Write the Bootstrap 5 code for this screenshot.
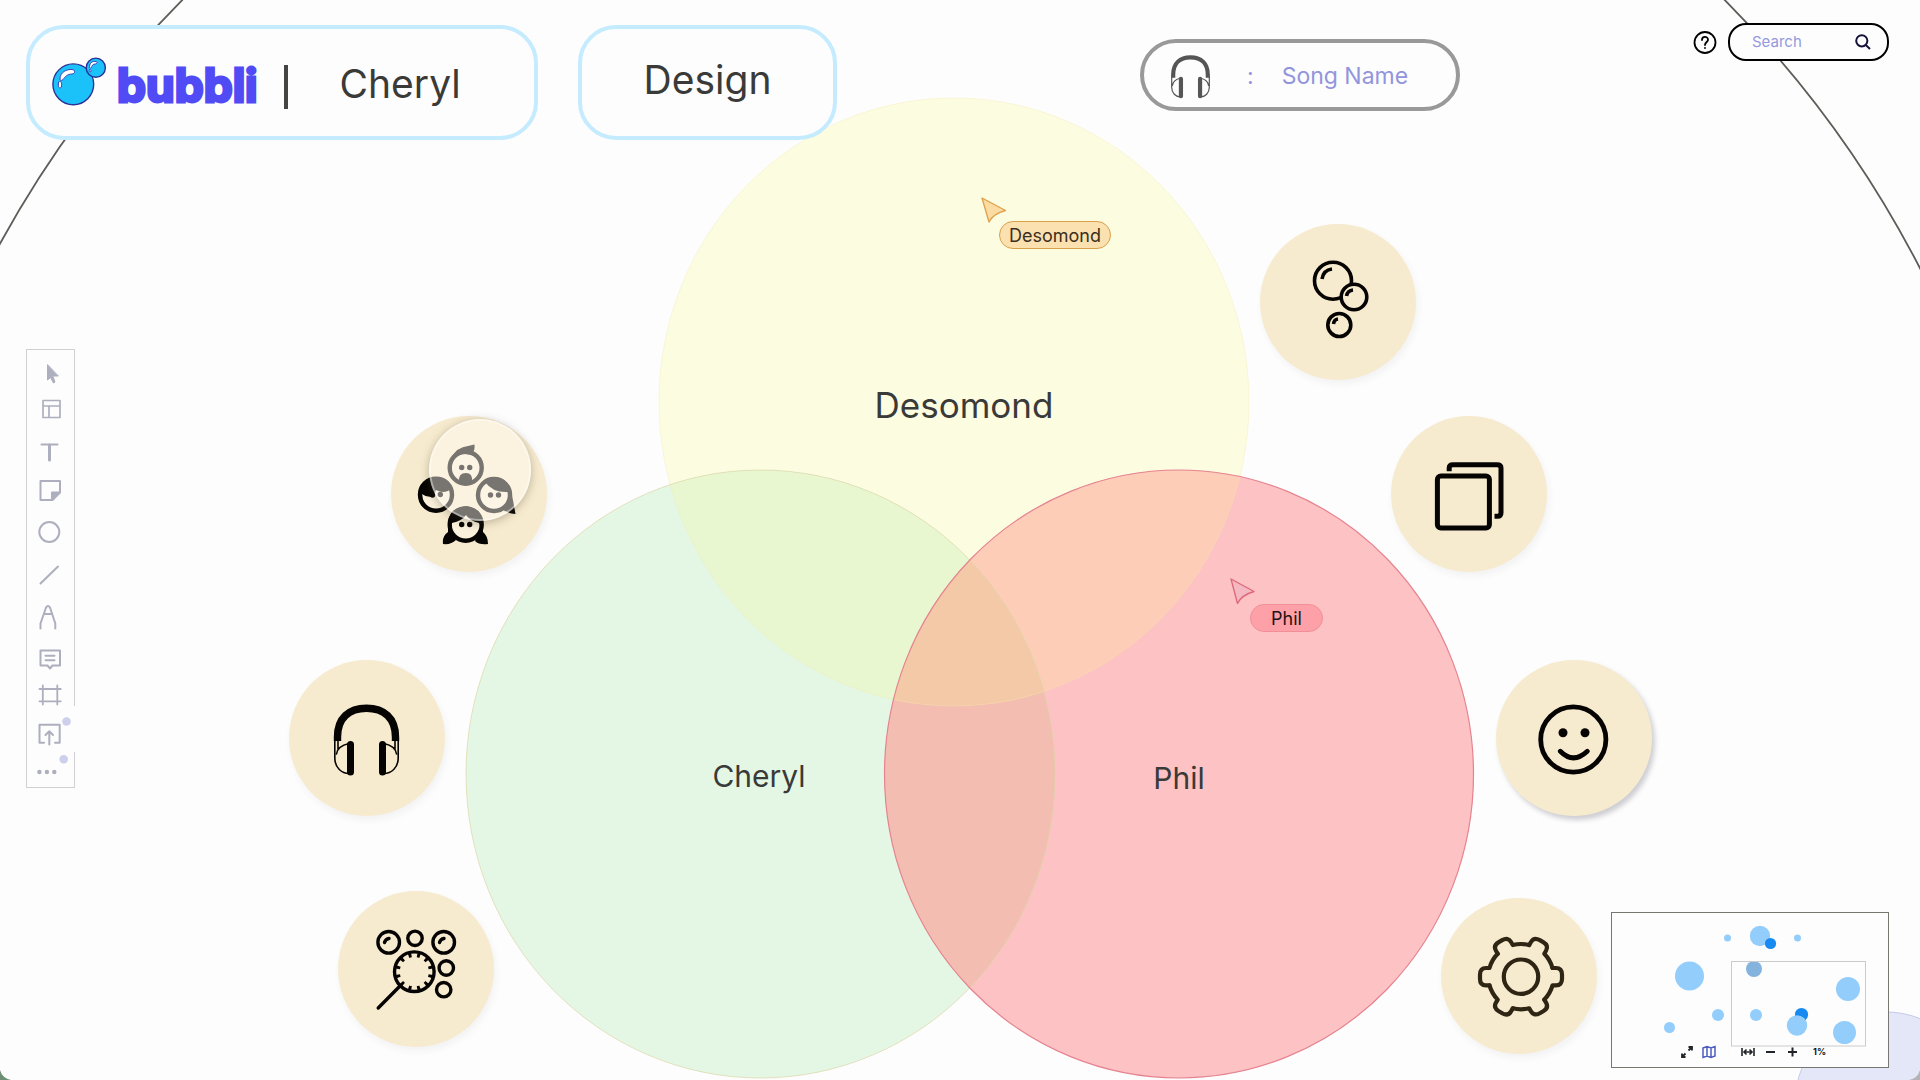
<!DOCTYPE html>
<html lang="en">
<head>
<meta charset="utf-8">
<meta name="viewport" content="width=device-width, initial-scale=1">
<title>bubbli – Design</title>
<link href="https://cdn.jsdelivr.net/npm/bootstrap@5.3.0/dist/css/bootstrap.min.css" rel="stylesheet">
<style>
  :root { --paper:#fdfdfd; --ink:#3a3a38; --sand:#f7ebcf; --tool:#adafbe; }
  body { background:var(--paper); color:var(--ink); font-family:Inter,"Liberation Sans",sans-serif; }
  svg { display:block; overflow:visible; }
  .workspace { min-height:100vh; overflow:hidden; }

  .topbar { padding:23px 31px 0 26px; z-index:3; }
  .panel-box { height:115px; margin-top:2px; border:4px solid #c5ebff; border-radius:38px; background:var(--paper); font-size:39px; }
  .panel-brand { width:512px; padding:4px 0 0 22px; margin-right:40px; }
  .panel-page { width:259px; padding-bottom:4px; margin-right:303px; }
  .brand { color:#514bf5; font-size:46px; font-weight:700; line-height:56px; gap:10px; -webkit-text-stroke:3px #514bf5; stroke-linejoin:round; }
  .brand:hover { color:#514bf5; }
  .divider { width:4px; height:44px; margin:4px 52px 0 26px; background:#444442; }
  .song { width:320px; height:72px; margin-top:16px; padding:2px 27px 0; border:4px solid #999; border-radius:36px; background:var(--paper); color:#9295dc; font-size:23px; }
  .song-colon { margin:0 28px 0 37px; }
  .help { width:23px; height:23px; }
  .search { width:161px; height:38px; border:2px solid #000; border-radius:18px; background:var(--paper); padding:0 16px 0 22px; }
  .search input { width:80px; font-size:15px; outline:0; color:#9499dd; }
  .search input::placeholder { color:#9499dd; opacity:1; }

  .tools { left:26px; top:349px; width:49px; padding:4px 0; border:1px solid #d2d0d3; background:var(--paper); z-index:2; }
  .tools::after { content:""; position:absolute; right:-2px; top:356px; width:4px; height:46px; background:var(--paper); }
  .tools button { width:47px; height:39px; }
  .tools svg { width:47px; height:39px; fill:none; stroke:var(--tool); stroke-width:2; stroke-linecap:round; stroke-linejoin:round; }

  .canvas { inset:0; }
  .scene { left:calc(50% - 960px); top:0; width:1920px; height:1080px; }
  .member { width:240px; text-align:center; line-height:40px; font-size:30px; }
  .m-top { left:calc(50% - 116px); top:385px; font-size:35px; }
  .m-left { left:calc(50% - 321px); top:756px; }
  .m-right { left:calc(50% + 99px); top:758px; }

  .orb { width:156px; height:156px; background:var(--sand); box-shadow:2px 4px 7px rgba(60,60,80,.06); }
  .orb svg { width:156px; height:156px; fill:none; stroke:#060402; stroke-linecap:round; stroke-linejoin:round; }
  .o-bubbles { left:calc(50% + 300px); top:224px; }
  .o-layers { left:calc(50% + 431px); top:416px; }
  .o-smile { left:calc(50% + 536px); top:660px; box-shadow:3px 4px 5px rgba(60,60,80,.24); }
  .o-gear { left:calc(50% + 481px); top:898px; }
  .o-people { left:calc(50% - 569px); top:416px; }
  .o-music { left:calc(50% - 671px); top:660px; }
  .o-wand { left:calc(50% - 622px); top:891px; }
  .lens { left:38px; top:3px; width:102px; height:102px; background:rgba(255,250,242,.46); border:2px solid rgba(255,255,255,.4); box-shadow:0 2px 10px rgba(70,60,40,.34); }

  .tag { height:28px; border:1px solid; border-radius:14px; font-size:18px; line-height:28px; text-align:center; color:#3b2e1c; }
  .t-top { left:calc(50% + 39px); top:221px; width:112px; background:#fce1b0; border-color:#d9a04c; }
  .t-right { left:calc(50% + 290px); top:604px; width:73px; background:#fda0a7; border-color:#f18f99; color:#1d1214; }

  .minimap { right:31px; bottom:12px; width:278px; height:156px; border:1px solid #777670; background:var(--paper); z-index:2; }
  .mini-controls { left:68px; bottom:7px; height:16px; color:#101522; }
  .mini-controls svg { height:14px; fill:none; stroke:currentColor; stroke-width:2; }
  .map-toggle { color:#4c5cc0; }
  .zoom-level { font-size:9px; font-weight:700; line-height:14px; margin-left:6px; }
</style>
</head>
<body>
<main class="workspace position-relative">

  <header class="topbar position-relative d-flex align-items-start">
    <div class="panel-box panel-brand d-flex align-items-center flex-shrink-0">
      <a href="#" class="brand d-flex align-items-start text-decoration-none">
        <svg width="55" height="49" viewBox="0 0 55 49" fill="#1bc2fa" stroke="#2b3196" stroke-width="1.4" aria-hidden="true">
          <circle cx="21.3" cy="27.3" r="20.4"/><circle cx="43.8" cy="10.7" r="9.6"/>
          <path d="M8 22C8 15 15 12 20 12.500C24 13 23 17 20 17C15 17 13 20 11 22.500C9 24 8 24 8 22ZM6.500 25C9 23.500 10 26 9.500 29C9 32 6.500 31 6.300 29ZM37.500 9.500C38 5 41 4.200 44 4.500C46 5 45 7 43 7C40 7.500 40 9 39.500 10.500C38.500 11.500 37.500 11 37.500 9.500ZM37.500 12.500C39 12 39.500 14 38.500 15C37 15 37 13.500 37.500 12.500Z" fill="#fff" stroke="#4140b8" stroke-width="1"/>
        </svg>
        <span>bubbli</span>
      </a>
      <span class="divider"></span>
      <span>Cheryl</span>
    </div>
    <h1 class="panel-box panel-page d-flex align-items-center justify-content-center fw-normal mb-0 flex-shrink-0">Design</h1>
    <div class="song d-flex align-items-center flex-shrink-0">
      <svg width="39" height="43" viewBox="45 44 65 72" fill="none" stroke="#555" aria-hidden="true">
        <path d="M48.500 82V77C48.500 58 60 48 77.500 48S106.500 58 106.500 77V82" stroke-width="7"/>
        <path d="M46 80V98C46 108 53 114 60 114M60 83Q48 86 47 96M109 80V98C109 108 102 114 95 114M95 83Q107 86 108 96" stroke-width="2"/>
        <path d="M61.500 84V113M93.500 84V113" stroke-width="7" stroke-linecap="round"/>
      </svg>
      <span class="song-colon">:</span><span>Song Name</span>
    </div>
    <div class="ms-auto d-flex align-items-center gap-2">
      <button type="button" class="help btn p-0 border-0 me-1" aria-label="Help">
        <svg width="23" height="23" viewBox="0 0 23 23" fill="none" stroke="#000" stroke-width="1.800" stroke-linecap="round"><circle cx="12" cy="11.500" r="10.500"/><path d="M9 9C9 5 15 5 15 8.700C15 11 12 11 12 14M12 16.800V17"/></svg>
      </button>
      <form class="search d-flex align-items-center justify-content-between">
        <input type="text" class="border-0 bg-transparent p-0" placeholder="Search" aria-label="Search">
        <button type="button" class="btn p-0 border-0" aria-label="Run search">
          <svg width="16" height="16" viewBox="0 0 16 16" fill="none" stroke="#14143a" stroke-width="2"><circle cx="6.800" cy="6.800" r="5.600"/><path d="M10.800 11L15 15"/></svg>
        </button>
      </form>
    </div>
  </header>

  <nav class="tools position-absolute d-flex flex-column" aria-label="Drawing tools">
    <button type="button" class="btn p-0 border-0" aria-label="Select"><svg><path d="M20.500 11V26L23.500 23.500L26.500 29L28 28L25.800 22H31Z" fill="#adafbe" stroke-width="1"/></svg></button>
    <button type="button" class="btn p-0 border-0" aria-label="Templates"><svg><path d="M16 7.500H33V24.500H16ZM16 13H33M22 13V24.500" stroke-width="1.700"/></svg></button>
    <button type="button" class="btn p-0 border-0" aria-label="Text"><svg><path d="M14.500 12.500H30.500" stroke-width="2"/><path d="M22.500 13V28" stroke-width="3"/></svg></button>
    <button type="button" class="btn p-0 border-0" aria-label="Sticky note"><svg><path d="M13.500 10H33V21L25.500 29H13.500Z"/><path d="M33 21.500H25V29Z" fill="#adafbe"/></svg></button>
    <button type="button" class="btn p-0 border-0" aria-label="Shape"><svg><circle cx="22.300" cy="22" r="10"/></svg></button>
    <button type="button" class="btn p-0 border-0" aria-label="Line"><svg><path d="M13.500 34.500L31 17.500"/></svg></button>
    <button type="button" class="btn p-0 border-0" aria-label="Pen"><svg><path d="M13.500 40.500V35.500L19 19.500Q21 16.500 23 19.500L28.300 35.500V40.500M17.500 26H24.500"/></svg></button>
    <button type="button" class="btn p-0 border-0" aria-label="Comment"><svg><path d="M13.500 23.500H33V38.500H25.500L23 41.500L20.500 38.500H13.500ZM18.500 28.800H27.500M18.500 33.300H27.500"/></svg></button>
    <button type="button" class="btn p-0 border-0" aria-label="Frame"><svg><path d="M15.800 19.500V38.500M30.300 19.500V38.500M12.500 23H33.700M12.500 35.300H33.700" stroke-width="1.800"/></svg></button>
    <button type="button" class="btn p-0 border-0" aria-label="Upload"><svg><path d="M17 37.700H12.500V19.700H32.700V37.700H28M22.300 39.500V26.500M18.500 30L22.300 26.300L26 30"/><circle cx="39.500" cy="16.500" r="4.300" fill="#cdcfed" stroke="none"/></svg></button>
    <button type="button" class="btn p-0 border-0" aria-label="More"><svg><g fill="#adafbe" stroke="none"><circle cx="12.400" cy="28" r="2.200"/><circle cx="19.900" cy="28" r="2.200"/><circle cx="27.300" cy="28" r="2.200"/></g><circle cx="36.700" cy="15.300" r="4.300" fill="#cdcfed" stroke="none"/></svg></button>
  </nav>

  <section class="canvas position-absolute" aria-label="Team board">
    <svg class="scene position-absolute" viewBox="0 0 1920 1080" aria-hidden="true">
      <defs>
        <ellipse id="eY" cx="954" cy="402" rx="295" ry="304"/>
        <ellipse id="eG" cx="760.500" cy="774" rx="294.500" ry="304"/>
        <ellipse id="eR" cx="1179" cy="774" rx="294.500" ry="304"/>
        <clipPath id="inG"><use href="#eG"/></clipPath>
        <clipPath id="inR"><use href="#eR"/></clipPath>
      </defs>
      <circle cx="953.500" cy="766" r="1087" fill="none" stroke="#5c5c58" stroke-width="1.800"/>
      <circle cx="1886" cy="1103" r="91" fill="#e4e7f8" stroke="#c8c7ea"/>
      <use href="#eY" fill="#fcfce1"/>
      <use href="#eG" fill="#e4f7e4"/>
      <use href="#eR" fill="#fdc2c3"/>
      <g clip-path="url(#inG)"><use href="#eY" fill="#e8f7d0"/><use href="#eR" fill="#f3bdb1"/></g>
      <g clip-path="url(#inR)"><use href="#eY" fill="#fdcdb7"/><g clip-path="url(#inG)"><use href="#eY" fill="#f4c9a7"/></g></g>
      <use href="#eY" fill="none" stroke="#f4e9a8" stroke-opacity=".35"/>
      <use href="#eG" fill="none" stroke="#dcd6a8" stroke-opacity=".7"/>
      <use href="#eR" fill="none" stroke="#e58390" stroke-width="1.200"/>
      <path d="M982 198L1005.500 210.500Q993.500 213.500 989 222Z" fill="#fbdca2" stroke="#dfa04a" stroke-width="1.300" stroke-linejoin="round"/>
      <path d="M1231 579L1254 591.500Q1241.500 595 1237.500 603.500Z" fill="#f4b8c2" stroke="#df6678" stroke-width="1.300" stroke-linejoin="round"/>
      <path d="M0 1070Q2 1078 11 1080H0Z" fill="#6d8f72"/>
      <path d="M1920 1070Q1918 1078 1909 1080H1920Z" fill="#b4b4b8"/>
    </svg>

    <div class="member m-top position-absolute">Desomond</div>
    <div class="member m-left position-absolute">Cheryl</div>
    <div class="member m-right position-absolute">Phil</div>
    <div class="tag t-top position-absolute">Desomond</div>
    <div class="tag t-right position-absolute">Phil</div>

    <button type="button" class="orb o-bubbles btn p-0 border-0 rounded-circle position-absolute" aria-label="Bubbles">
      <svg stroke-width="3.600"><circle cx="73" cy="56.700" r="18.500"/><circle cx="94" cy="73" r="12.800" fill="#f7ebcf"/><circle cx="79.300" cy="101" r="11.500"/><path d="M62 55Q63.500 46 72 45M86.500 72Q87.500 66.500 93 66M73.500 100Q74 95.500 78 95" stroke-linecap="butt"/></svg>
    </button>
    <button type="button" class="orb o-layers btn p-0 border-0 rounded-circle position-absolute" aria-label="Layers">
      <svg stroke-width="5"><rect x="46.400" y="60" width="52" height="52" rx="3.500"/><path d="M58.200 55.300V52Q58.200 48.700 62 48.700H106Q110 48.700 110 52V96.800Q110 100.300 106.500 100.300H103.500" stroke-linecap="butt"/></svg>
    </button>
    <button type="button" class="orb o-smile btn p-0 border-0 rounded-circle position-absolute" aria-label="Reactions">
      <svg stroke-width="4.800"><circle cx="77.300" cy="79.500" r="32.600"/><path d="M64.300 91.300Q77.300 104.500 91.300 91.300"/><g fill="#060402" stroke="none"><circle cx="67" cy="72.700" r="4.500"/><circle cx="89" cy="72.700" r="4.500"/></g></svg>
    </button>
    <button type="button" class="orb o-gear btn p-0 border-0 rounded-circle position-absolute" aria-label="Settings">
      <svg><defs><path id="tooth" d="M31.500-8.700H35Q41-8.700 41-2V2Q41 8.700 35 8.700H31.500A32.700 32.700 0 0 1 23.300 22.900"/></defs>
        <g transform="translate(80 78.700)" stroke="#2f2514" stroke-width="4.200"><circle r="17.200"/><use href="#tooth"/><use href="#tooth" transform="rotate(60)"/><use href="#tooth" transform="rotate(120)"/><use href="#tooth" transform="rotate(180)"/><use href="#tooth" transform="rotate(240)"/><use href="#tooth" transform="rotate(300)"/></g></svg>
    </button>
    <button type="button" class="orb o-people btn p-0 border-0 rounded-circle position-absolute" aria-label="People">
      <svg stroke-width="4.400"><g fill="#faf1dc"><circle cx="74.700" cy="51.700" r="16"/><circle cx="45" cy="78.700" r="16"/><circle cx="103" cy="79" r="16"/><circle cx="74.700" cy="108.700" r="16"/></g>
        <g fill="#060402" stroke="none">
          <path d="M60 42Q66 31 77 30L83.500 28.500Q84 34 82 36Q87 38 90 44Q75 33 60 42ZM68 66Q67 57 75 57Q82 57 81 66Q75 70 68 66Z"/>
          <path d="M28 78Q29 62 45 61Q58 61 61 72Q54 79 45 74Q43 79 43 80Q36 82 31 78Q31 87 38 92L34 93Q27 88 28 78Z"/>
          <path d="M94 66Q98 61 103 61Q119 62 121 79L124.500 98Q115 97 111 93L117 87Q118 80 117 76Q102 77 94 66Z"/>
          <path d="M57 108Q58 91 75 90Q92 92 92 108V116Q97 120 97 128Q88 129 84 125L88 116Q91 112 88 107Q79 105 75 99Q71 105 61 107Q58 112 62 117L65 124Q60 129 52 128Q51 120 57 116Z"/>
          <circle cx="70.700" cy="51.500" r="2.700"/><circle cx="78.700" cy="51.500" r="2.700"/><circle cx="41.500" cy="79" r="2.700"/><circle cx="49.300" cy="78.500" r="2.700"/><circle cx="99.500" cy="79" r="2.700"/><circle cx="107.500" cy="79" r="2.700"/><circle cx="70.700" cy="108.500" r="2.700"/><circle cx="78.700" cy="108.500" r="2.700"/>
        </g></svg>
      <span class="lens position-absolute rounded-circle"></span>
    </button>
    <button type="button" class="orb o-music btn p-0 border-0 rounded-circle position-absolute" aria-label="Music">
      <svg><path d="M48.500 81V77C48.500 58 60 48.200 77.500 48.200S106.500 58 106.500 77V81" stroke-width="7.400" stroke-linecap="butt"/>
        <path d="M45.800 80V98C45.800 108 53 113.500 60 113.500M60 83.500Q48.500 86 47.500 94M49 80V89M109.200 80V98C109.200 108 102 113.500 95 113.500M95 83.500Q106.500 86 107.500 94M106 80V89" stroke-width="1.600"/>
        <path d="M61.500 84.500V112M93.500 84.500V112" stroke-width="7"/></svg>
    </button>
    <button type="button" class="orb o-wand btn p-0 border-0 rounded-circle position-absolute" aria-label="Bubble wand">
      <svg stroke-width="3.400"><circle cx="50.700" cy="51.300" r="10.800"/><circle cx="105.700" cy="51.300" r="10.800"/><circle cx="77" cy="47.300" r="7.200"/><circle cx="108.300" cy="77" r="7.200"/><circle cx="105.700" cy="98.700" r="7.200"/><circle cx="76.300" cy="80.700" r="19.800"/>
        <circle cx="76.300" cy="80.700" r="16.800" stroke-width="4.500" stroke-linecap="butt" pathLength="36" stroke-dasharray="1 2" stroke-dashoffset="-1"/>
        <path d="M61.500 95.500L40.200 117M46.500 51.500Q47.500 48 51 47.500M101.500 51.500Q102.500 48 106 47.500"/></svg>
    </button>
  </section>

  <aside class="minimap position-absolute" aria-label="Map of the board">
    <svg width="276" height="154" viewBox="0 0 276 154" fill="#93cdfb" aria-hidden="true">
      <circle cx="115.500" cy="25" r="3.500"/><circle cx="185.500" cy="25" r="3.500"/><circle cx="148" cy="23" r="10.200"/><circle cx="158.500" cy="30.500" r="5.600" fill="#168af0"/>
      <circle cx="77.500" cy="63" r="14.500"/><circle cx="142" cy="56" r="8" fill="#84b4dd"/><circle cx="236" cy="76" r="12"/><circle cx="106" cy="102" r="6"/><circle cx="144" cy="102" r="6"/>
      <circle cx="189.500" cy="101.500" r="6.600" fill="#168af0"/><circle cx="185" cy="112.500" r="10.200"/><circle cx="232.500" cy="119.500" r="11.500"/><circle cx="57.500" cy="114.500" r="5.500"/>
      <rect x="119.500" y="48.500" width="134" height="84.500" fill="none" stroke="#cbcbcb"/>
    </svg>
    <div class="mini-controls position-absolute d-flex align-items-center gap-2">
      <button type="button" class="btn p-0 border-0" aria-label="Expand"><svg width="14" viewBox="0 0 14 14"><path d="M2 8.500V12H5.500M2.500 11.500L5.500 8.500M8.500 2H12V5.500M11.500 2.500L8.500 5.500" stroke-width="1.800"/></svg></button>
      <button type="button" class="map-toggle btn p-0 border-0" aria-label="Toggle map"><svg width="14" viewBox="0 0 14 14"><path d="M1 3L5 1.500L9 3L13 1.500V11L9 12.500L5 11L1 12.500ZM5 1.500V11M9 3V12.500" stroke-width="1.500"/></svg></button>
      <span class="vr mx-1 bg-light"></span>
      <button type="button" class="btn p-0 border-0" aria-label="Fit to width"><svg width="14" viewBox="0 0 14 14"><path d="M1 3V11M13 3V11M3 7H11M5.500 4.500L3 7L5.500 9.500M8.500 4.500L11 7L8.500 9.500" stroke-width="1.600"/></svg></button>
      <button type="button" class="btn p-0 border-0" aria-label="Zoom out"><svg width="14" viewBox="0 0 14 14"><path d="M3 7H12"/></svg></button>
      <button type="button" class="btn p-0 border-0" aria-label="Zoom in"><svg width="14" viewBox="0 0 14 14"><path d="M3 7H12M7.500 2.500V11.500"/></svg></button>
      <span class="zoom-level">1%</span>
    </div>
  </aside>
</main>
<script src="https://cdn.jsdelivr.net/npm/bootstrap@5.3.0/dist/js/bootstrap.bundle.min.js"></script>
</body>
</html>
